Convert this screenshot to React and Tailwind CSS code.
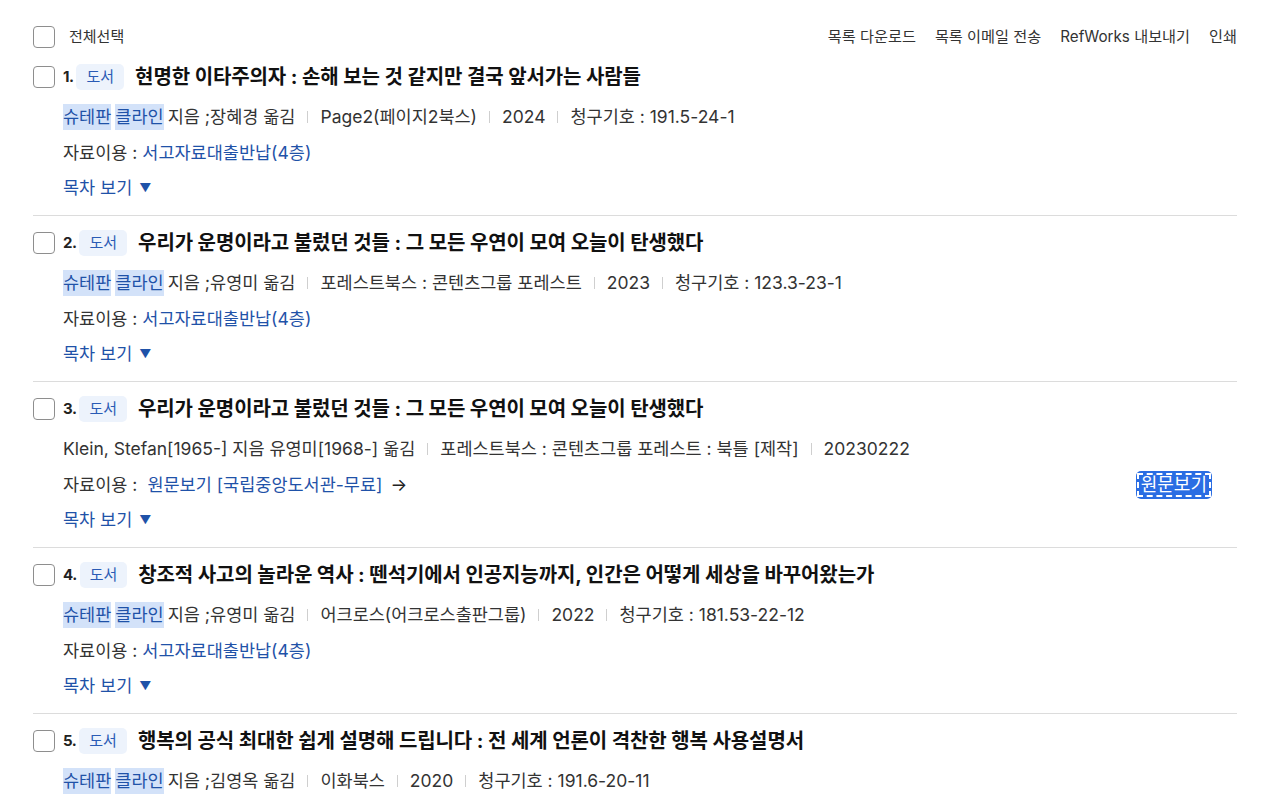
const books = [
  {
    no: 1,
    title: "현명한 이타주의자 : 손해 보는 것 같지만 결국 앞서가는 사람들",
    authorHi: true,
    authorRest: "지음 ;장혜경 옮김",
    meta: ["Page2(페이지2북스)", "2024", "청구기호 : 191.5-24-1"],
    usage: "서고자료대출반납(4층)",
  },
  {
    no: 2,
    title: "우리가 운명이라고 불렀던 것들 : 그 모든 우연이 모여 오늘이 탄생했다",
    authorHi: true,
    authorRest: "지음 ;유영미 옮김",
    meta: ["포레스트북스 : 콘텐츠그룹 포레스트", "2023", "청구기호 : 123.3-23-1"],
    usage: "서고자료대출반납(4층)",
  },
  {
    no: 3,
    title: "우리가 운명이라고 불렀던 것들 : 그 모든 우연이 모여 오늘이 탄생했다",
    authorHi: false,
    authorRest: "Klein, Stefan[1965-] 지음 유영미[1968-] 옮김",
    meta: ["포레스트북스 : 콘텐츠그룹 포레스트 : 북틀 [제작]", "20230222"],
    online: true,
  },
  {
    no: 4,
    title: "창조적 사고의 놀라운 역사 : 뗀석기에서 인공지능까지, 인간은 어떻게 세상을 바꾸어왔는가",
    authorHi: true,
    authorRest: "지음 ;유영미 옮김",
    meta: ["어크로스(어크로스출판그룹)", "2022", "청구기호 : 181.53-22-12"],
    usage: "서고자료대출반납(4층)",
  },
  {
    no: 5,
    title: "행복의 공식 최대한 쉽게 설명해 드립니다 : 전 세계 언론이 격찬한 행복 사용설명서",
    authorHi: true,
    authorRest: "지음 ;김영옥 옮김",
    meta: ["이화북스", "2020", "청구기호 : 191.6-20-11"],
    usage: "서고자료대출반납(4층)",
  },
];

function Box() {
  return <span className="block w-[22px] h-[22px] shrink-0 rounded-[4px] border-[1.5px] border-[#8e8e8e] bg-white" />;
}

function Sep() {
  return <span className="mx-[12px] inline-block w-px h-[12px] bg-[#cfcfcf]" />;
}

function Item({ b, first }) {
  return (
    <div className={first ? "pt-[3px] pb-[8px]" : "border-t border-[#dcdcdc] pt-[7px] pb-[8px]"}>
      <div className="h-[40px] flex items-center">
        <Box />
        <span className="ml-[8px] text-[15px] font-bold text-[#222] tracking-[-0.5px]">{b.no}.</span>
        <span className="ml-[3px] h-[26px] px-[10px] flex items-center rounded-[5px] bg-[#edf3fc] text-[15px] text-[#2a5bb5]">
          도서
        </span>
        <span className="ml-[11px] text-[20px] font-bold text-[#111] tracking-[-0.1px]">{b.title}</span>
      </div>
      <div className="h-[40px] flex items-center pl-[30px] text-[17.5px] text-[#333]">
        {b.authorHi && (
          <>
            <span className="bg-[#d3e2f9] text-[#1f52a8]">슈테판</span>
            <span className="ml-[4px] bg-[#d3e2f9] text-[#1f52a8]">클라인</span>
            <span className="ml-[4px]">{b.authorRest}</span>
          </>
        )}
        {!b.authorHi && <span>{b.authorRest}</span>}
        {b.meta.map((m) => (
          <span key={m} className="flex items-center">
            <Sep />
            {m}
          </span>
        ))}
      </div>
      <div className="h-[32px] flex items-center justify-between pl-[30px] text-[17.5px] text-[#333]">
        {b.online ? (
          <span className="flex items-center">
            자료이용 :
            <span className="ml-[10px] text-[#1f52a8]">원문보기 [국립중앙도서관-무료]</span>
            <span className="ml-[8px] text-[#222]">→</span>
          </span>
        ) : (
          <span>
            자료이용 : <span className="text-[#1f52a8]">{b.usage}</span>
          </span>
        )}
        {b.online && (
          <span className="mr-[25px] h-[28px] px-[3px] flex items-center rounded-[5px] bg-[#2a6de3]">
            <span className="px-[2px] leading-[20px] outline-2 outline-dashed outline-white text-white text-[18px]">
              원문보기
            </span>
          </span>
        )}
      </div>
      <div className="h-[38px] flex items-center pl-[30px] text-[17.5px] text-[#1f52a8]">
        목차 보기 <span className="ml-[7px] text-[12px]">▼</span>
      </div>
    </div>
  );
}

export default function App() {
  return (
    <div
      className="min-h-screen bg-white pt-[20px] pl-[33px] pr-[43px]"
      style={{ fontFamily: 'Inter, "Noto Sans CJK KR", sans-serif' }}
    >
      <div className="h-[34px] flex items-center justify-between">
        <div className="flex items-center">
          <Box />
          <span className="ml-[14px] text-[15px] text-[#333]">전체선택</span>
        </div>
        <div className="flex items-center gap-[19px] text-[15.2px] text-[#333]">
          <span>목록 다운로드</span>
          <span>목록 이메일 전송</span>
          <span>RefWorks 내보내기</span>
          <span>인쇄</span>
        </div>
      </div>
      {books.map((b, i) => (
        <Item key={b.no} b={b} first={i === 0} />
      ))}
    </div>
  );
}
